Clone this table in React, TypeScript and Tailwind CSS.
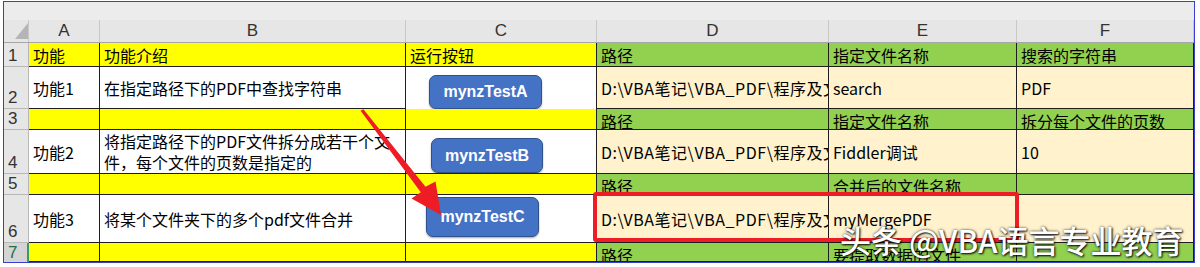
import React from "react";

const Y = "bg-[#ffff00]";
const G = "bg-[#92d050]";
const W = "bg-white";
const C = "bg-[#fff2cc]";

const PATH = "D:\\VBA笔记\\VBA_PDF\\程序及文件";

type Cell = [string, React.ReactNode, string?];

type Row = {
  n: string;
  h: string;
  tall: boolean;
  cells: Cell[];
};

// macro button shape sitting in column C
const MacroButton = ({ label, className }: { label: string; className: string }) => (
  <div
    className={`flex shrink-0 items-center justify-center rounded-[7px] border border-[#2f528f] bg-[#4472c4] text-[16px] font-bold leading-none text-white shadow-[0_1px_2px_rgba(0,0,0,0.35)] font-['Liberation_Sans',sans-serif] ${className}`}
  >
    {label}
  </div>
);

const Path = () => <span className="tracking-[0.55px]">{PATH}</span>;

const rows: Row[] = [
  {
    n: "1",
    h: "h-[24px]",
    tall: false,
    cells: [
      [Y, "功能"],
      [Y, "功能介绍"],
      [Y, "运行按钮"],
      [G, "路径"],
      [G, "指定文件名称"],
      [G, "搜索的字符串"],
    ],
  },
  {
    n: "2",
    h: "h-[42px]",
    tall: true,
    cells: [
      [W, "功能1"],
      [W, "在指定路径下的PDF中查找字符串"],
      [W, <MacroButton label="mynzTestA" className="h-[34px] w-[113px]" />, "self-start pl-[23px] pt-[8px]"],
      [C, <Path />],
      [C, "search"],
      [C, "PDF"],
    ],
  },
  {
    n: "3",
    h: "h-[21px]",
    tall: false,
    cells: [
      [Y, ""],
      [Y, ""],
      [Y, ""],
      [G, "路径"],
      [G, "指定文件名称"],
      [G, "拆分每个文件的页数"],
    ],
  },
  {
    n: "4",
    h: "h-[44px]",
    tall: true,
    cells: [
      [W, "功能2"],
      [
        W,
        <div className="leading-[21px]">
          将指定路径下的PDF文件拆分成若干个文
          <br />
          件，每个文件的页数是指定的
        </div>,
      ],
      [W, <MacroButton label="mynzTestB" className="h-[35px] w-[112px]" />, "pl-[25px] pt-[8px]"],
      [C, <Path />],
      [C, "Fiddler调试"],
      [C, "10"],
    ],
  },
  {
    n: "5",
    h: "h-[21px]",
    tall: false,
    cells: [
      [Y, ""],
      [Y, ""],
      [Y, ""],
      [G, "路径"],
      [G, "合并后的文件名称"],
      [G, ""],
    ],
  },
  {
    n: "6",
    h: "h-[48px]",
    tall: true,
    cells: [
      [W, "功能3"],
      [W, "将某个文件夹下的多个pdf文件合并"],
      [W, <MacroButton label="mynzTestC" className="h-[40px] w-[113px]" />, "pl-[20px] pt-[2px]"],
      [C, <Path />],
      [C, "myMergePDF"],
      [C, ""],
    ],
  },
  {
    n: "7",
    h: "h-[19px]",
    tall: false,
    cells: [
      [Y, ""],
      [Y, ""],
      [Y, ""],
      [G, "路径"],
      [G, "要提取数据的文件"],
      [G, ""],
    ],
  },
];

const COLS = "grid grid-cols-[25px_71px_306px_191px_232px_188px_177px]";

export default function App() {
  return (
    <div className="relative h-[267px] w-[1200px] overflow-hidden bg-white font-['Noto_Sans_CJK_SC',sans-serif] text-[16px] text-black">
      <div className="ml-[3px] mt-[1px] w-[1192px] border border-[#3b3bd6]">
        {/* top strip */}
        <div className="h-[18px] bg-[#ececec]" />

        {/* column letters */}
        <div className={`${COLS} h-[23px] border-b border-[#a6a6a6] bg-[#e6e6e6] font-['Liberation_Sans',sans-serif] text-[17px] text-[#333]`}>
          <div className="relative border-r border-[#c8c8c8]">
            <svg className="absolute left-[11px] top-[3px]" width="13" height="16" viewBox="0 0 13 16">
              <polygon points="13,0 13,16 0,16" fill="#b5b5b5" />
            </svg>
          </div>
          {["A", "B", "C", "D", "E", "F"].map((l) => (
            <div key={l} className="flex items-end justify-center border-r border-[#c8c8c8] leading-[22px]">
              {l}
            </div>
          ))}
        </div>

        {/* rows */}
        {rows.map((r) => (
          <div key={r.n} className={`${COLS} ${r.h}`}>
            <div
              className={
                r.n === "7"
                  ? "flex items-end overflow-hidden border-r-2 border-[#3c9a5f] bg-[#d4d4d4] pl-[4px] font-['Liberation_Sans',sans-serif] text-[17px] leading-[19px] text-[#217346]"
                  : "flex items-end overflow-hidden border-b border-r border-[#b8b8b8] bg-[#e6e6e6] pl-[4px] font-['Liberation_Sans',sans-serif] text-[17px] leading-[20px] text-[#333]"
              }
            >
              {r.n}
            </div>
            {r.cells.map(([bg, text, extra], i) => (
              <div
                key={i}
                className={`${bg} flex overflow-hidden whitespace-nowrap border-b border-r border-[#1e1e1e] leading-[24px] ${
                  extra ? `items-start ${extra}` : r.tall ? "items-center pl-[4px]" : "items-start pl-[4px]"
                }`}
              >
                {text}
              </div>
            ))}
          </div>
        ))}
      </div>

      {/* red arrow */}
      <svg className="absolute left-0 top-0" width="1200" height="267" viewBox="0 0 1200 267">
        <polygon
          points="363.4,109.2 425.5,186.8 435.5,181.5 441,215 411.5,198.5 420.8,192.2 360.6,110.8"
          fill="#ee1c25"
        />
      </svg>

      {/* red highlight box */}
      <div className="absolute left-[593px] top-[192px] h-[50px] w-[426px] rounded-[3px] border-[4px] border-[#ee1c25]" />

      {/* watermark */}
      <div className="absolute left-[840px] top-[220px] whitespace-nowrap text-[31px] font-medium leading-[40px] text-white [text-shadow:1px_1px_2px_rgba(0,0,0,0.9),0_0_3px_rgba(0,0,0,0.7)]">
        头条 @VBA语言专业教育
      </div>
    </div>
  );
}
